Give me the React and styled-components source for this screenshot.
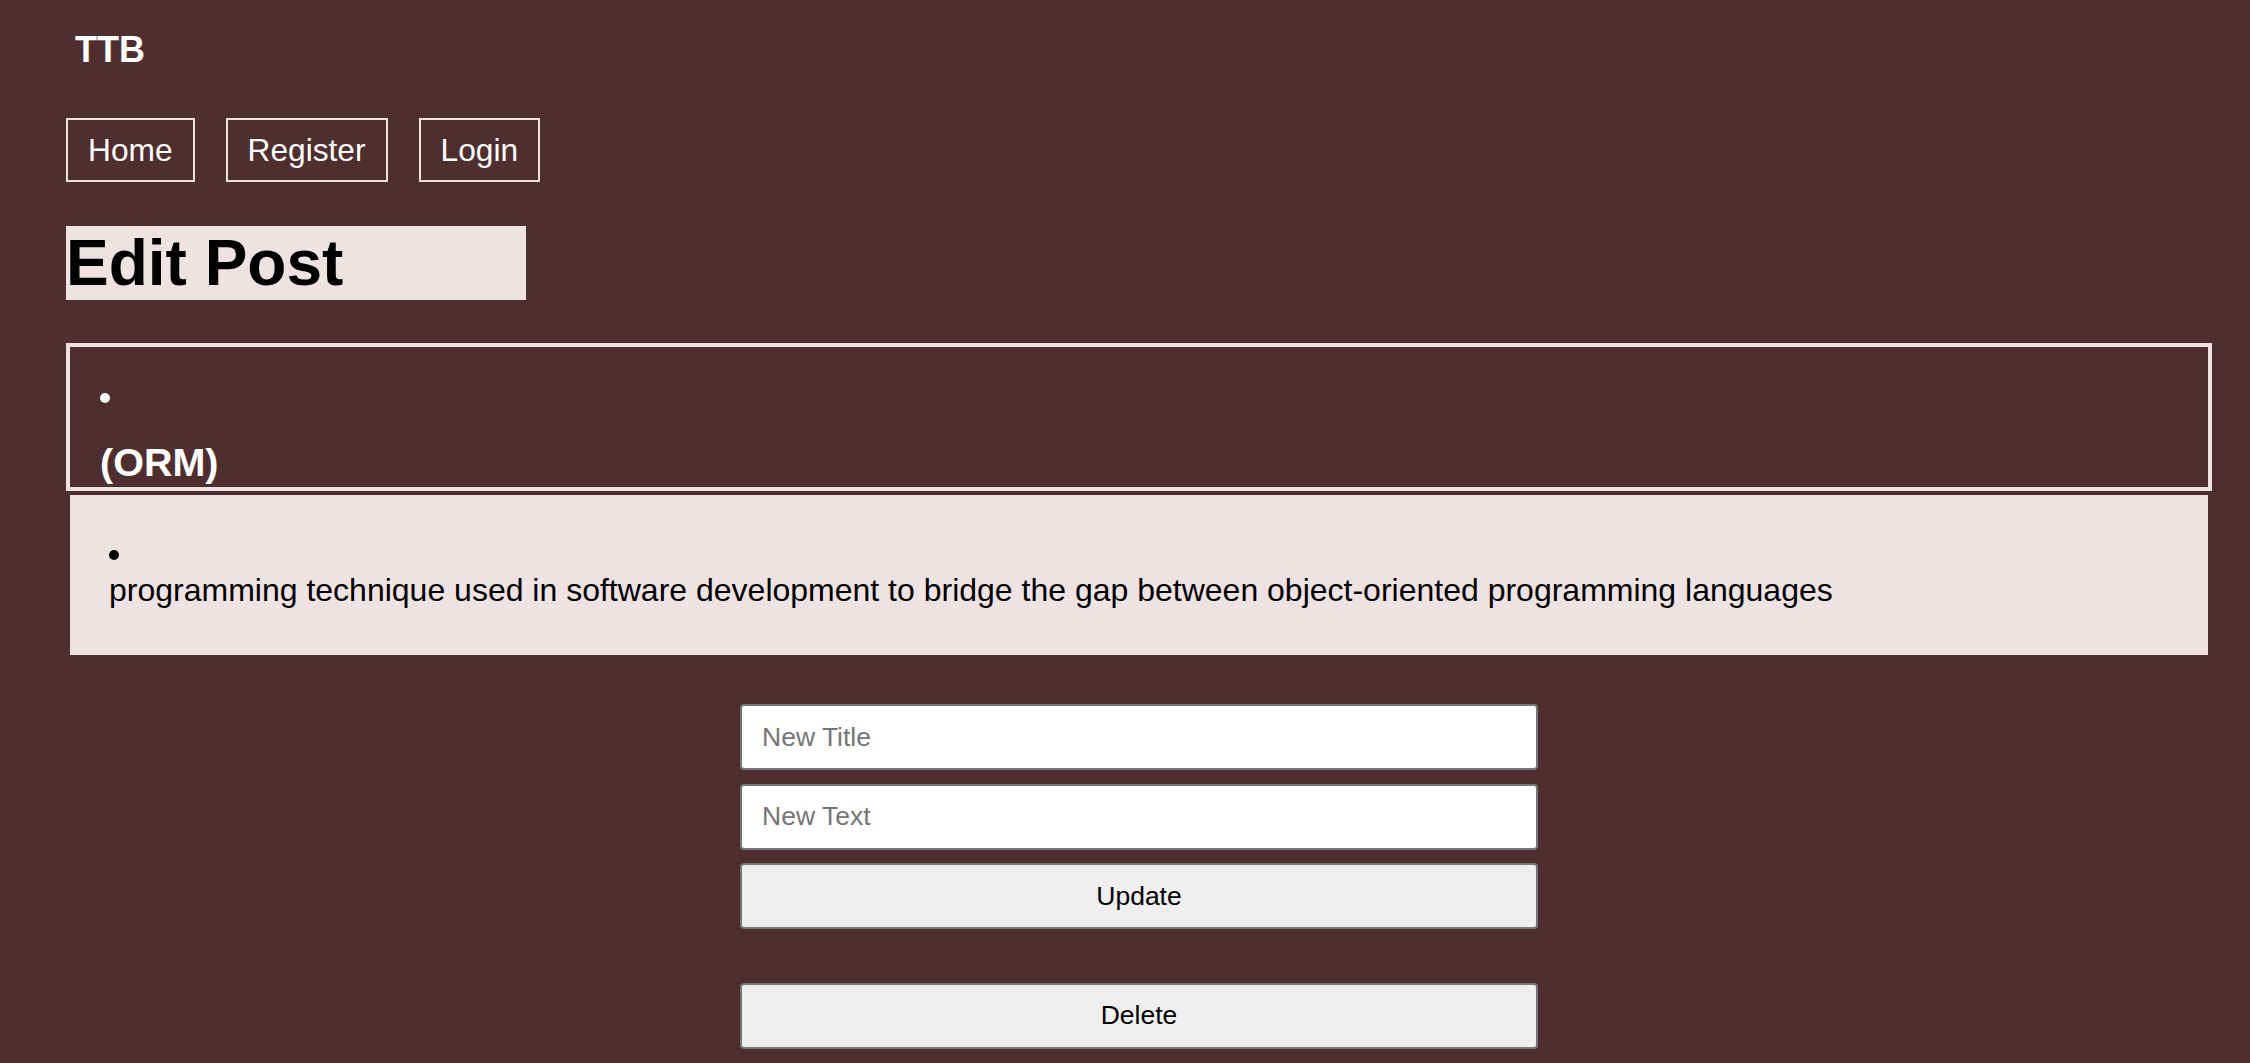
import React, { useState } from 'react';
import styled, { createGlobalStyle } from 'styled-components';

const GlobalStyle = createGlobalStyle`
  body {
    margin: 0;
    background: #4e2e2e;
    font-family: "Liberation Sans", Arial, sans-serif;
  }
`;

const Page = styled.div`
  padding: 29px 38px 16px 66px;
`;

const Brand = styled.div`
  padding-left: 9px;
  font-size: 36px;
  font-weight: 700;
  color: #fff;
`;

const Nav = styled.nav`
  display: flex;
  gap: 31px;
  margin-top: 46.5px;
`;

const NavLink = styled.a`
  border: 2px solid #eee2e2;
  padding: 12px 20px;
  font-size: 31.7px;
  line-height: 36px;
  color: #fff;
  text-decoration: none;
`;

const Title = styled.h1`
  width: 460px;
  margin: 44px 0 0;
  background: #eee2e2;
  font-size: 64px;
  font-weight: 700;
  color: #000;
`;

const PostList = styled.ul`
  margin: 43px 0 0;
  padding: 0;
`;

const Card = styled.li`
  list-style: disc inside;
  font-size: 32px;
  border: 4px solid ${({ $light }) => ($light ? '#4e2e2e' : '#eee2e2')};
  background: ${({ $light }) => ($light ? '#eee2e2' : 'transparent')};
  color: ${({ $light }) => ($light ? '#000' : '#fff')};
  padding: ${({ $light }) => ($light ? '40px 30px 46px 39px' : '31px 30px 2px 30px')};
`;

const PostTitle = styled.h2`
  margin: 25px 0 0;
  font-size: 39.5px;
  font-weight: 700;
`;

const PostText = styled.p`
  margin: 0;
  font-size: 32px;
`;

const Form = styled.form`
  display: flex;
  flex-direction: column;
  gap: 13.5px;
  width: 798px;
  margin: 45.5px auto 0;
`;

const Input = styled.input`
  box-sizing: border-box;
  height: 66px;
  padding: 0 20px;
  border: 2px solid #767676;
  border-radius: 4px;
  background: #fff;
  font-family: inherit;
  font-size: 26.5px;
  color: #000;

  &::placeholder {
    color: #757575;
  }
`;

const Button = styled.button`
  box-sizing: border-box;
  height: 66px;
  margin-top: ${({ $spaced }) => ($spaced ? '40px' : '0')};
  border: 2px solid #767676;
  border-radius: 4px;
  background: #efefef;
  font-family: inherit;
  font-size: 26.5px;
  color: #000;
  cursor: pointer;
`;

const App = () => {
    const [title, setTitle] = useState('');
    const [text, setText] = useState('');

    const handleUpdate = (e) => {
        e.preventDefault();
    };

    return (
        <>
            <GlobalStyle />
            <Page>
                <Brand>TTB</Brand>
                <Nav>
                    <NavLink href="#">Home</NavLink>
                    <NavLink href="#">Register</NavLink>
                    <NavLink href="#">Login</NavLink>
                </Nav>
                <Title>Edit Post</Title>

                <PostList>
                    <Card>
                        <PostTitle>(ORM)</PostTitle>
                    </Card>
                    <Card $light>
                        <PostText>
                            programming technique used in software development to bridge the gap between object-oriented programming languages
                        </PostText>
                    </Card>
                </PostList>

                <Form onSubmit={handleUpdate}>
                    <Input
                        type="text"
                        placeholder="New Title"
                        value={title}
                        onChange={(e) => setTitle(e.target.value)}
                    />
                    <Input
                        type="text"
                        placeholder="New Text"
                        value={text}
                        onChange={(e) => setText(e.target.value)}
                    />
                    <Button type="submit">Update</Button>
                    <Button type="button" $spaced>Delete</Button>
                </Form>
            </Page>
        </>
    );
};

export default App;
